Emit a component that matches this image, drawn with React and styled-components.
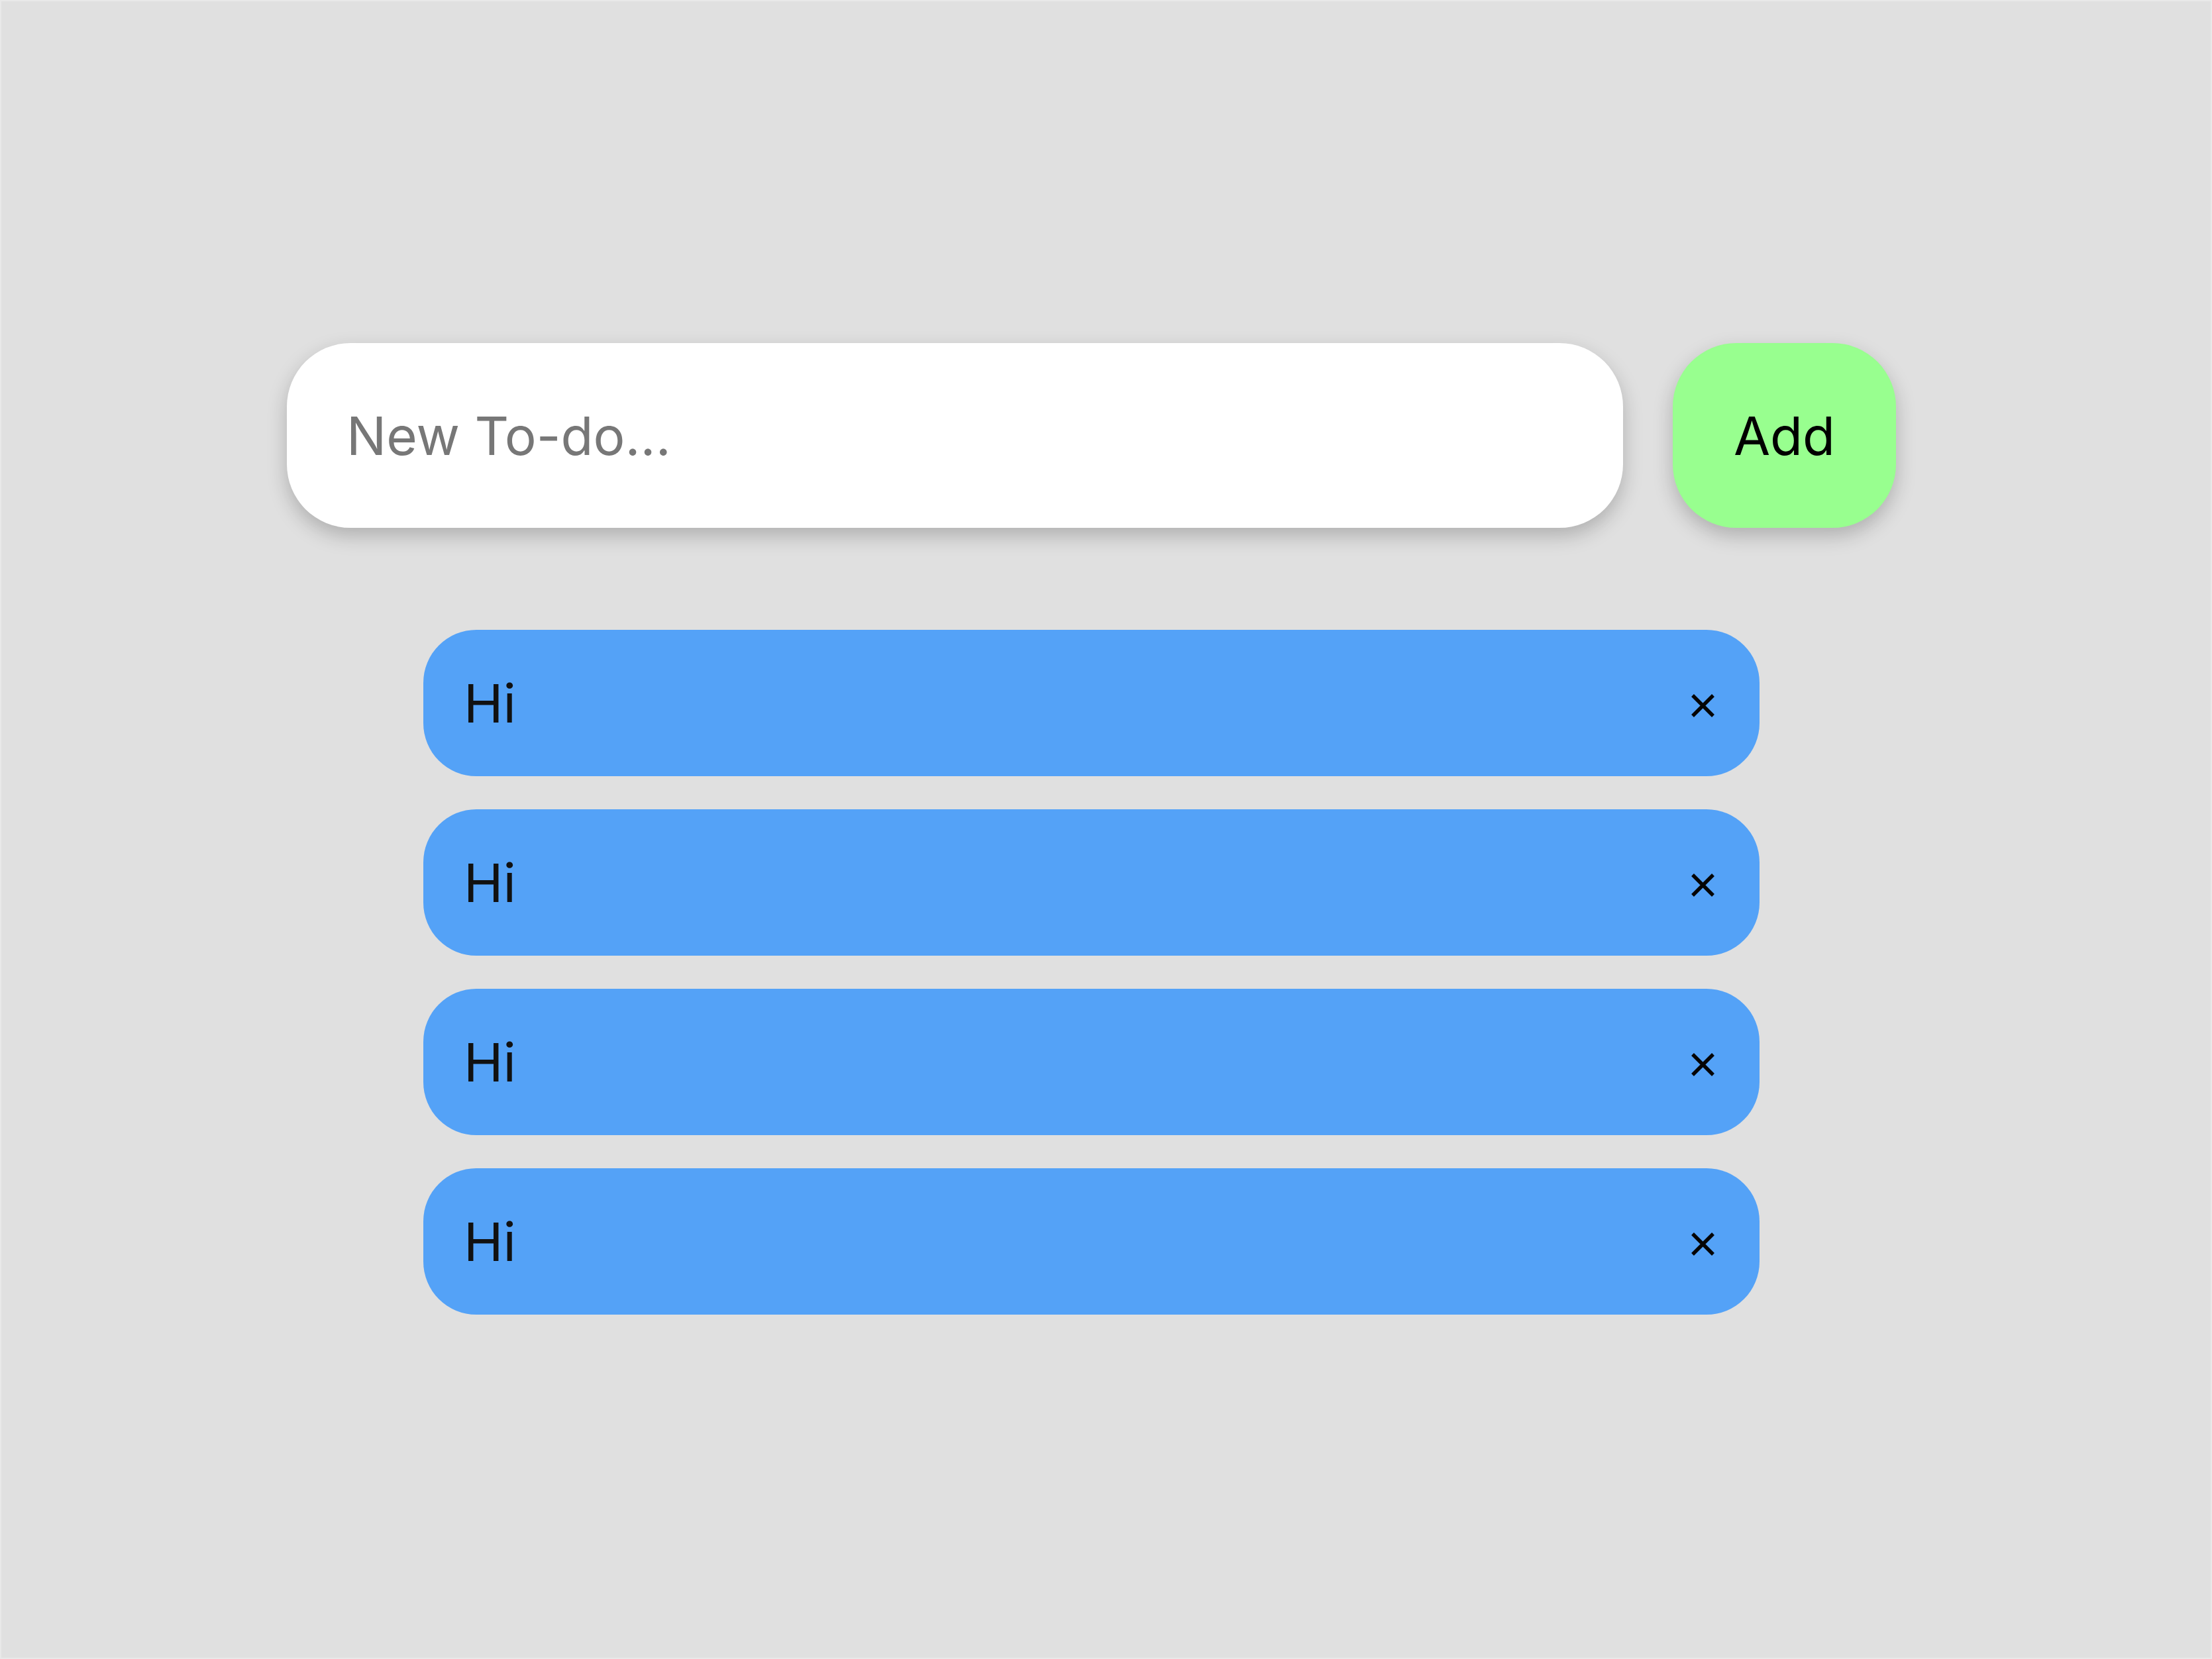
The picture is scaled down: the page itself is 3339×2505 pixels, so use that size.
import React, { useState } from 'react';
import styled, { createGlobalStyle } from 'styled-components';

const GlobalStyle = createGlobalStyle`
  html, body {
    margin: 0;
    padding: 0;
    background: #e0e0e0;
  }
  * {
    box-sizing: border-box;
  }
`;

const Page = styled.div`
  min-height: 100vh;
  border: 2px solid #e9e9e9;
  padding: 516px 44px 0 0;
  display: flex;
  flex-direction: column;
  align-items: center;
  font-family: Inter, "Noto Sans", sans-serif;
`;

const InputRow = styled.form`
  display: flex;
  gap: 75px;
  width: 2429px;
`;

const TodoInput = styled.input`
  flex: 1;
  height: 279px;
  border: none;
  outline: none;
  border-radius: 96px;
  background: #fff;
  padding: 0 90px;
  font-family: Inter, "Noto Sans", sans-serif;
  font-size: 80px;
  color: #222;
  box-shadow: 0 12px 30px rgba(0, 0, 0, 0.22);

  &::placeholder {
    color: #777;
  }
`;

const AddButton = styled.button`
  width: 337px;
  height: 279px;
  border: none;
  border-radius: 96px;
  background: #98ff8f;
  color: #000;
  font-family: Inter, "Noto Sans", sans-serif;
  font-size: 80px;
  cursor: pointer;
  box-shadow: 0 12px 30px rgba(0, 0, 0, 0.22);
`;

const List = styled.ul`
  list-style: none;
  margin: 154px 0 0;
  padding: 0;
  width: 2017px;
  display: flex;
  flex-direction: column;
  gap: 50px;
`;

const Item = styled.li`
  height: 221px;
  border-radius: 80px;
  background: #54a2f7;
  display: flex;
  align-items: center;
  justify-content: space-between;
  padding: 0 67px 0 61px;
  font-size: 80px;
  color: #111;
`;

const RemoveButton = styled.button`
  background: none;
  border: none;
  padding: 0;
  width: 37px;
  height: 37px;
  margin-top: 7px;
  display: flex;
  cursor: pointer;
`;

// small × drawn as two strokes
const CloseIcon = () => (
  <svg width="37" height="37" viewBox="0 0 37 37">
    <path d="M3 3 L34 34 M34 3 L3 34" stroke="#050505" strokeWidth="5.5" strokeLinecap="butt" />
  </svg>
);

const App = () => {
  const [todos, setTodos] = useState(['Hi', 'Hi', 'Hi', 'Hi']);
  const [text, setText] = useState('');

  const handleSubmit = (e) => {
    e.preventDefault();
    if (!text.trim()) return;
    setTodos([...todos, text]);
    setText('');
  };

  return (
    <>
      <GlobalStyle />
      <Page>
        <InputRow onSubmit={handleSubmit}>
          <TodoInput
            placeholder="New To-do..."
            value={text}
            onChange={(e) => setText(e.target.value)}
          />
          <AddButton type="submit">Add</AddButton>
        </InputRow>
        <List>
          {todos.map((todo, i) => (
            <Item key={i}>
              <span>{todo}</span>
              <RemoveButton onClick={() => setTodos(todos.filter((_, j) => j !== i))}>
                <CloseIcon />
              </RemoveButton>
            </Item>
          ))}
        </List>
      </Page>
    </>
  );
};

export default App;
